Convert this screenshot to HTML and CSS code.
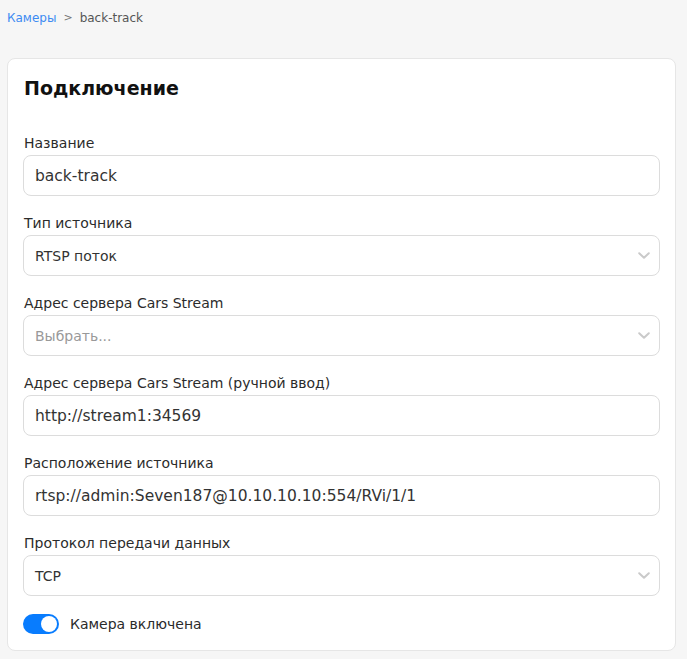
FILE: index.html
```html
<!DOCTYPE html>
<html lang="ru">
<head>
<meta charset="utf-8">
<link rel="stylesheet" href="styles.css">
</head>
<body>
<div class="page">
  <nav class="crumbs">
    <a class="crumb-link" href="#">Камеры</a>
    <span class="crumb-sep">&gt;</span>
    <span class="crumb-cur">back-track</span>
  </nav>
  <section class="card">
    <h2 class="title">Подключение</h2>
    <div class="field">
      <label class="label">Название</label>
      <div class="input big">back-track</div>
    </div>
    <div class="field">
      <label class="label">Тип источника</label>
      <div class="input select">RTSP поток<svg class="chev" viewBox="0 0 12 7" width="12" height="7"><path d="M1.2 1.2 L6 5.8 L10.8 1.2" fill="none" stroke="#cacaca" stroke-width="2" stroke-linecap="round" stroke-linejoin="round"/></svg></div>
    </div>
    <div class="field">
      <label class="label">Адрес сервера Cars Stream</label>
      <div class="input select placeholder">Выбрать...<svg class="chev" viewBox="0 0 12 7" width="12" height="7"><path d="M1.2 1.2 L6 5.8 L10.8 1.2" fill="none" stroke="#cacaca" stroke-width="2" stroke-linecap="round" stroke-linejoin="round"/></svg></div>
    </div>
    <div class="field">
      <label class="label">Адрес сервера Cars Stream (ручной ввод)</label>
      <div class="input big">http://stream1:34569</div>
    </div>
    <div class="field">
      <label class="label">Расположение источника</label>
      <div class="input big">rtsp://admin:Seven187@10.10.10.10:554/RVi/1/1</div>
    </div>
    <div class="field">
      <label class="label">Протокол передачи данных</label>
      <div class="input select">TCP<svg class="chev" viewBox="0 0 12 7" width="12" height="7"><path d="M1.2 1.2 L6 5.8 L10.8 1.2" fill="none" stroke="#cacaca" stroke-width="2" stroke-linecap="round" stroke-linejoin="round"/></svg></div>
    </div>
    <div class="toggle-row">
      <span class="toggle"><span class="knob"></span></span>
      <span class="toggle-label">Камера включена</span>
    </div>
  </section>
</div>
</body>
</html>
```
FILE: styles.css
```css
html, body {
  margin: 0;
  padding: 0;
  background: #f6f6f6;
}
body {
  font-family: "DejaVu Sans", sans-serif;
  color: #2b2b2b;
}
.page {
  padding: 9px 11px 9px 7px;
}
.crumbs {
  display: flex;
  align-items: center;
  gap: 7px;
  font-size: 12px;
  height: 17px;
  margin-bottom: 32px;
}
.crumb-link {
  color: #3d8bf2;
  text-decoration: none;
}
.crumb-sep {
  color: #777;
  font-size: 11px;
}
.crumb-cur {
  color: #555;
}
.card {
  background: #fff;
  border: 1px solid #e6e6e6;
  border-radius: 8px;
  padding: 16px 15px 16px 15px;
}
.title {
  margin: 0 0 33px 1px;
  font-size: 19px;
  font-weight: bold;
  color: #111;
  line-height: 26px;
}
.field {
  display: flex;
  flex-direction: column;
  margin-bottom: 18px;
}
.label {
  font-size: 14px;
  line-height: 18px;
  margin-left: 1px;
  margin-bottom: 3px;
  color: #2b2b2b;
}
.input {
  height: 41px;
  box-sizing: border-box;
  border: 1px solid #dcdcdc;
  border-radius: 8px;
  display: flex;
  align-items: center;
  padding: 0 9px 0 11px;
  font-size: 14px;
  color: #333;
}
.input.big {
  font-size: 15.5px;
}
.select {
  justify-content: space-between;
}
.placeholder {
  color: #999;
}
.toggle-row {
  display: flex;
  align-items: center;
  gap: 11px;
  margin-top: 0;
}
.toggle {
  width: 36px;
  height: 20px;
  border-radius: 10px;
  background: #087cfe;
  position: relative;
  display: inline-block;
}
.knob {
  position: absolute;
  right: 2px;
  top: 2px;
  width: 16px;
  height: 16px;
  border-radius: 50%;
  background: #fff;
}
.toggle-label {
  font-size: 14px;
  color: #2b2b2b;
}
```
